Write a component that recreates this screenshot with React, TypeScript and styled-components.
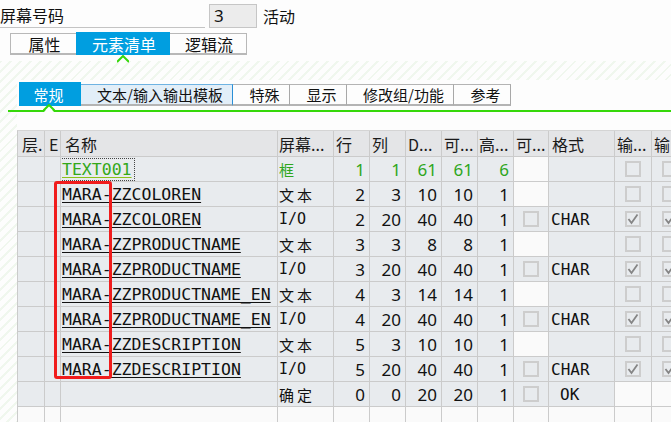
import React from 'react'
import styled, { createGlobalStyle, css } from 'styled-components'

const CJK = `"Noto Sans CJK SC", "Noto Sans", sans-serif`
const MONO = `"DejaVu Sans Mono", "Noto Sans CJK SC", monospace`
const NUM = `"Noto Sans", "Noto Sans CJK SC", sans-serif`

const GREEN = '#36d80a'
const BLUE = '#009ee0'

const GlobalStyle = createGlobalStyle`
    html, body {
        margin: 0;
        padding: 0;
        background: #fdfdfd;
        overflow: hidden;
    }
`

type Kind = 'frame' | 'text' | 'io' | 'button'

interface IElement {
    name: string;
    type: string;
    line: number;
    col: number;
    def: number;
    vis: number;
    height: number;
    kind: Kind;
}

const elements: IElement[] = [
    { name: 'TEXT001', type: '框', line: 1, col: 1, def: 61, vis: 61, height: 6, kind: 'frame' },
    { name: 'MARA-ZZCOLOREN', type: '文本', line: 2, col: 3, def: 10, vis: 10, height: 1, kind: 'text' },
    { name: 'MARA-ZZCOLOREN', type: 'I/O', line: 2, col: 20, def: 40, vis: 40, height: 1, kind: 'io' },
    { name: 'MARA-ZZPRODUCTNAME', type: '文本', line: 3, col: 3, def: 8, vis: 8, height: 1, kind: 'text' },
    { name: 'MARA-ZZPRODUCTNAME', type: 'I/O', line: 3, col: 20, def: 40, vis: 40, height: 1, kind: 'io' },
    { name: 'MARA-ZZPRODUCTNAME_EN', type: '文本', line: 4, col: 3, def: 14, vis: 14, height: 1, kind: 'text' },
    { name: 'MARA-ZZPRODUCTNAME_EN', type: 'I/O', line: 4, col: 20, def: 40, vis: 40, height: 1, kind: 'io' },
    { name: 'MARA-ZZDESCRIPTION', type: '文本', line: 5, col: 3, def: 10, vis: 10, height: 1, kind: 'text' },
    { name: 'MARA-ZZDESCRIPTION', type: 'I/O', line: 5, col: 20, def: 40, vis: 40, height: 1, kind: 'io' },
    { name: '', type: '确定', line: 0, col: 0, def: 20, vis: 20, height: 1, kind: 'button' },
]

const COLS = [27, 16, 217, 56, 36, 36, 36, 36, 36, 35, 66, 37, 37]
const HEADERS: { label: string; pad: number }[] = [
    { label: '层.', pad: 4 },
    { label: 'E', pad: 4 },
    { label: '名称', pad: 4 },
    { label: '屏幕...', pad: 1 },
    { label: '行', pad: 2 },
    { label: '列', pad: 2 },
    { label: 'D...', pad: 2 },
    { label: '可...', pad: 2 },
    { label: '高...', pad: 1 },
    { label: '可...', pad: 2 },
    { label: '格式', pad: 3 },
    { label: '输...', pad: 2 },
    { label: '输', pad: 2 },
]

const tabs1 = [
    { label: '属性', w: 66 },
    { label: '元素清单', w: 94, active: true },
    { label: '逻辑流', w: 77 },
]

const tabs2 = [
    { label: '常规', w: 62, active: true },
    { label: '文本/输入输出模板', w: 152, hover: true },
    { label: '特殊', w: 57 },
    { label: '显示', w: 57 },
    { label: '修改组/功能', w: 107 },
    { label: '参考', w: 57 },
]

const Page = styled.div`
    width: 671px;
    height: 422px;
    overflow: hidden;
    background: #fdfdfd;
    display: flex;
    flex-direction: column;
`

const TopRow = styled.div`
    display: flex;
    align-items: center;
    padding-top: 4px;
    height: 24px;
`

const FieldLabel = styled.div`
    box-sizing: border-box;
    width: 205px;
    height: 24px;
    border-bottom: 1px solid #c4c4c4;
    font: 16px ${CJK};
    color: #111;
    line-height: 22px;
`

const FieldInput = styled.div`
    box-sizing: border-box;
    width: 48px;
    height: 24px;
    margin-left: 4px;
    padding-left: 4px;
    background: #ececec;
    border: 1px solid #c6c6c6;
    font: 17px ${NUM};
    color: #111;
    line-height: 21px;
`

const FieldText = styled.div`
    margin-left: 6px;
    font: 16px ${CJK};
    color: #111;
`

const TabStrip = styled.div<{ $ml: number; $mt: number }>`
    display: flex;
    align-items: flex-start;
    margin-left: ${p => p.$ml}px;
    margin-top: ${p => p.$mt}px;
`

const TopTab = styled.div<{ $w: number; $active?: boolean }>`
    box-sizing: border-box;
    width: ${p => p.$w}px;
    display: flex;
    align-items: center;
    justify-content: center;
    padding-left: 2px;
    font: 16px ${CJK};

    ${p => p.$active ? css`
        height: 23px;
        background: ${BLUE};
        color: #fff;
    ` : css`
        margin-top: 1px;
        height: 22px;
        border-top: 1px solid #b8b8b8;
        border-bottom: 2px solid #b8b8b8;
        color: #111;
    `}

    &:first-child { border-left: 1px solid #b8b8b8; }
    &:last-child { border-right: 1px solid #b8b8b8; }
`

const SubTab = styled.div<{ $w: number; $active?: boolean; $hover?: boolean }>`
    box-sizing: border-box;
    width: ${p => p.$w}px;
    display: flex;
    align-items: center;
    justify-content: center;
    font: 15px ${CJK};

    ${p => p.$active ? css`
        height: 24px;
        background: ${BLUE};
        color: #fff;
        padding-right: 3px;
    ` : css`
        margin-top: 2px;
        height: 22px;
        padding-left: 7px;
        border-top: 1px solid ${p.$hover ? '#6fb3e2' : '#b4b4b4'};
        border-right: 1px solid ${p.$hover ? '#2a8fd6' : '#a8a8a8'};
        border-bottom: 2px solid #b4b4b4;
        background: ${p.$hover ? '#e2eef8' : '#fdfdfd'};
        color: #111;
    `}
`

const Rule = styled.div<{ $ml: number; $mt: number }>`
    position: relative;
    height: 2px;
    margin-left: ${p => p.$ml}px;
    margin-top: ${p => p.$mt}px;
    background: ${GREEN};
`

const Notch = styled.svg<{ $x: number }>`
    position: absolute;
    left: ${p => p.$x}px;
    top: -6px;
`

const Hatched = styled.div`
    flex: 1;
    display: flex;
    flex-direction: column;
    padding-top: 19px;
    background: repeating-linear-gradient(135deg, #f0f7ee 0 2px, #fdfdfd 2px 7px);
`

const TabPanel = styled.div`
    margin-left: 17px;
    padding: 2px 0 4px 2px;
    background: #fdfdfd;
`

const GridPanel = styled.div`
    flex: 1;
    margin-left: 17px;
    padding-top: 18px;
    background: #fdfdfd;
    overflow: hidden;
`

const Grid = styled.div`
    position: relative;
    display: grid;
    grid-template-columns: ${COLS.map(c => `${c}px`).join(' ')};
    grid-template-rows: 26px;
    grid-auto-rows: 25px;
    border-top: 1px solid #d4d4d4;
    border-left: 1px solid #cbcbcb;
`

const HeadCell = styled.div<{ $pad: number }>`
    box-sizing: border-box;
    padding-left: ${p => p.$pad}px;
    display: flex;
    align-items: center;
    overflow: hidden;
    white-space: nowrap;
    background: #e4e5e7;
    border-right: 1px solid #cbcbcb;
    border-bottom: 1px solid #cbcbcb;
    font: 16px ${CJK};
    color: #1a1a1a;
`

const Cell = styled.div<{ $white?: boolean; $align?: 'left' | 'right' | 'center'; $green?: boolean }>`
    box-sizing: border-box;
    display: flex;
    align-items: center;
    justify-content: ${p => p.$align === 'right' ? 'flex-end' : p.$align === 'center' ? 'center' : 'flex-start'};
    padding: 0 ${p => p.$align === 'right' ? 4 : 0}px 0 ${p => p.$align === 'left' ? 1 : 0}px;
    overflow: hidden;
    white-space: nowrap;
    background: ${p => p.$white ? '#fafafa' : '#e8ebee'};
    border-right: 1px solid #cbcbcb;
    border-bottom: 1px solid #cbcbcb;
    color: ${p => p.$green ? '#2ea61c' : '#111'};
`

const NameText = styled.span`
    font: 16.5px ${MONO};
    color: #111;
    text-decoration: underline;
    text-decoration-thickness: 1px;
    text-underline-offset: 2px;
`

const FocusName = styled(NameText)`
    color: #33a81a;
    text-decoration-color: #8cc21a;
    outline: 1px dotted #444;
    outline-offset: 1px;
    margin-left: -1px;
    padding: 0 1px;
`

const TypeText = styled.span<{ $mono?: boolean }>`
    font: ${p => p.$mono ? `15px ${MONO}` : `15px ${CJK}`};
    letter-spacing: ${p => p.$mono ? 0 : 3}px;
`

const Num = styled.span`
    font: 17px ${NUM};
`

const Format = styled.span<{ $indent: number }>`
    margin-left: ${p => p.$indent}px;
    font: 16px ${MONO};
    color: #111;
`

const Box = styled.span`
    box-sizing: border-box;
    width: 16px;
    height: 16px;
    border: 2px solid #cdcdcd;
    display: inline-flex;
    align-items: center;
    justify-content: center;
`

const Highlight = styled.div`
    position: absolute;
    left: 36px;
    top: 50px;
    width: 58px;
    height: 198px;
    box-sizing: border-box;
    border: 3px solid #f01c1c;
    border-radius: 3px;
    pointer-events: none;
`

const CheckBox: React.FC<{ checked?: boolean }> = ({ checked }) => (
    <Box>
        {checked &&
            <svg width="12" height="12" viewBox="0 0 12 12">
                <polyline points="1.5,6 4.5,10 10.5,1.5" fill="none" stroke="#858585" strokeWidth="1.8" />
            </svg>
        }
    </Box>
)

const NotchMark: React.FC<{ x: number }> = ({ x }) => (
    <Notch $x={x} width="12" height="9" viewBox="0 0 12 9">
        <polygon points="1,8 6,2 11,8" fill="#fdfdfd" />
        <polyline points="0,7 6,1 12,7" fill="none" stroke={GREEN} strokeWidth="2" />
    </Notch>
)

const ElementRow: React.FC<{ el: IElement }> = ({ el }) => {
    const green = el.kind === 'frame'
    const io = el.kind === 'io'
    const nums = [el.line, el.col, el.def, el.vis, el.height]

    return (
        <>
            <Cell />
            <Cell />
            <Cell $align="left">
                {el.kind === 'frame'
                    ? <FocusName>{el.name}</FocusName>
                    : el.name && <NameText>{el.name}</NameText>}
            </Cell>
            <Cell $align="left" $green={green}>
                <TypeText $mono={io}>{el.type}</TypeText>
            </Cell>
            {nums.map((n, i) =>
                <Cell key={i} $align="right" $green={green}><Num>{n}</Num></Cell>
            )}
            {el.kind === 'frame' || el.kind === 'text'
                ? <Cell $white />
                : <Cell $align="center"><CheckBox /></Cell>}
            <Cell $align="left">
                {io && <Format $indent={1}>CHAR</Format>}
                {el.kind === 'button' && <Format $indent={10}>OK</Format>}
            </Cell>
            {el.kind === 'button'
                ? <><Cell $white /><Cell $white /></>
                : <>
                    <Cell $align="center"><CheckBox checked={io} /></Cell>
                    <Cell $align="center"><CheckBox checked={io} /></Cell>
                </>}
        </>
    )
}

const App: React.FC = () => {
    return (
        <Page>
            <GlobalStyle />
            <TopRow>
                <FieldLabel>屏幕号码</FieldLabel>
                <FieldInput>3</FieldInput>
                <FieldText>活动</FieldText>
            </TopRow>

            <TabStrip $ml={10} $mt={4}>
                {tabs1.map(t =>
                    <TopTab key={t.label} $w={t.w} $active={t.active}>{t.label}</TopTab>
                )}
            </TabStrip>

            <Rule $ml={0} $mt={6}>
                <NotchMark x={117} />
            </Rule>

            <Hatched>
                <TabPanel>
                    <TabStrip $ml={0} $mt={0}>
                        {tabs2.map(t =>
                            <SubTab key={t.label} $w={t.w} $active={t.active} $hover={t.hover}>{t.label}</SubTab>
                        )}
                    </TabStrip>
                </TabPanel>

                <Rule $ml={8} $mt={0}>
                    <NotchMark x={35} />
                </Rule>

                <GridPanel>
                    <Grid>
                        {HEADERS.map(h =>
                            <HeadCell key={h.label + h.pad} $pad={h.pad}>{h.label}</HeadCell>
                        )}
                        {elements.map((el, i) => <ElementRow key={i} el={el} />)}
                        {COLS.map((_, i) => <Cell key={'e' + i} $white />)}
                        <Highlight />
                    </Grid>
                </GridPanel>
            </Hatched>
        </Page>
    )
}

export default App
